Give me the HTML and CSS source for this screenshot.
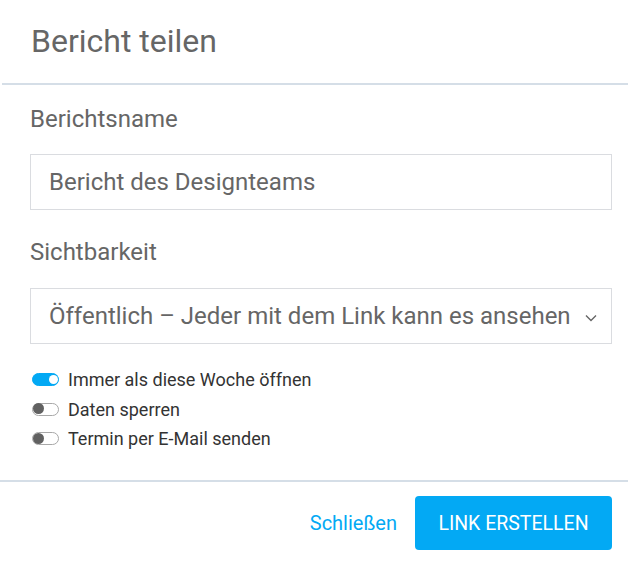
FILE: index.html
```html
<!DOCTYPE html>
<html lang="de">
<head>
<meta charset="utf-8">
<link rel="stylesheet" href="styles.css">
</head>
<body>
<div class="dialog">
  <div class="header"><h1 class="title">Bericht teilen</h1></div>
  <div class="content">
    <div class="label label-first">Berichtsname</div>
    <div class="field">Bericht des Designteams</div>
    <div class="label">Sichtbarkeit</div>
    <div class="field select">
      <span>Öffentlich – Jeder mit dem Link kann es ansehen</span>
      <svg class="chevron" width="12" height="8" viewBox="0 0 12 8"><path d="M1 1.5 L6 6.5 L11 1.5" fill="none" stroke="#666" stroke-width="1.4"/></svg>
    </div>
    <ul class="options">
      <li class="option"><span class="toggle on"><span class="knob"></span></span>Immer als diese Woche öffnen</li>
      <li class="option"><span class="toggle"><span class="knob"></span></span>Daten sperren</li>
      <li class="option"><span class="toggle"><span class="knob"></span></span>Termin per E-Mail senden</li>
    </ul>
  </div>
  <div class="footer">
    <button class="btn-text">Schließen</button>
    <button class="btn-primary">LINK ERSTELLEN</button>
  </div>
</div>
</body>
</html>
```

FILE: styles.css
```css
* { box-sizing: border-box; }
html, body { margin: 0; padding: 0; background: #fff; }
body { font-family: Roboto, "Noto Sans", sans-serif; color: #666; }
.dialog { width: 628px; }
.header {
  height: 85px;
  margin-left: 2px;
  padding-left: 29px;
  display: flex;
  align-items: center;
  border-bottom: 2px solid #d5dee7;
}
.title { margin: 0; font-size: 32px; font-weight: 400; color: #666; line-height: 36px; padding-bottom: 1px; }
.content { padding: 0 16px 0 30px; }
.label { font-size: 24px; line-height: 28px; color: #666; margin-top: 28px; margin-bottom: 22px; }
.label-first { margin-top: 20px; margin-bottom: 21px; }
.field {
  height: 56px;
  border: 1px solid #dadce0;
  padding-left: 18px;
  display: flex;
  align-items: center;
  font-size: 24px;
  color: #666;
}
.select { justify-content: space-between; padding-right: 14px; }
.chevron { margin-top: 3px; }
.options { list-style: none; margin: 0; padding: 21px 0 0 2px; }
.option { display: flex; align-items: center; height: 29.5px; font-size: 18px; color: #333; }
.toggle {
  width: 27px; height: 13px;
  border-radius: 7px;
  border: 1.5px solid #a8a8a8;
  background: #fff;
  margin-right: 9px;
  position: relative;
  display: inline-block;
  flex: none;
}
.toggle .knob {
  position: absolute; top: -0.5px; left: -0.5px;
  width: 11px; height: 11px; border-radius: 50%;
  background: #616161;
}
.toggle.on { background: #03a9f4; border-color: #03a9f4; }
.toggle.on .knob { left: auto; right: 0.5px; top: 0.5px; width: 9px; height: 9px; background: #fff; }
.footer {
  margin-top: 26.5px;
  border-top: 2px solid #d5dee7;
  display: flex;
  justify-content: flex-end;
  align-items: center;
  padding: 14px 16px 0 0;
  gap: 18px;
}
.btn-text {
  border: none; background: none; padding: 0;
  font-family: Roboto, sans-serif; font-size: 20px; color: #03a9f4;
}
.btn-primary {
  border: none; border-radius: 4px;
  background: #03a9f4; color: #fff;
  width: 197px; height: 54px;
  font-family: Roboto, sans-serif; font-size: 19.5px;
}
```
